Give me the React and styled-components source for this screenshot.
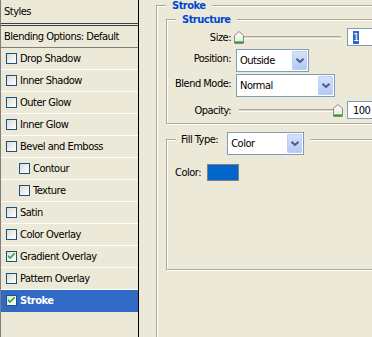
import styled, { createGlobalStyle } from "styled-components";

const GlobalStyle = createGlobalStyle`
  html, body {
    margin: 0;
    padding: 0;
    background: #ece9d8;
  }
  body {
    font-family: "DejaVu Sans Condensed", "Liberation Sans", Arial, sans-serif;
    font-size: 11px;
    letter-spacing: -0.5px;
    color: #000;
  }
`;

const effects = [
  { name: "Drop Shadow" },
  { name: "Inner Shadow" },
  { name: "Outer Glow" },
  { name: "Inner Glow" },
  { name: "Bevel and Emboss" },
  { name: "Contour", sub: true },
  { name: "Texture", sub: true },
  { name: "Satin" },
  { name: "Color Overlay" },
  { name: "Gradient Overlay", checked: true },
  { name: "Pattern Overlay" },
  { name: "Stroke", checked: true, selected: true },
];

function Check({ checked }) {
  return (
    <CheckBox>
      {checked && (
        <svg width="7" height="7" viewBox="0 0 7 7">
          <path d="M0 2 L0 4 L2 6 L7 1 L7 -1 L2 4 Z" fill="#21a121" />
        </svg>
      )}
    </CheckBox>
  );
}

function Chevron() {
  return (
    <svg width="8" height="5" viewBox="0 0 8 5">
      <path d="M0.5 0.8 L4 4 L7.5 0.8" fill="none" stroke="#4d6185" strokeWidth="2" />
    </svg>
  );
}

function Combo({ value, width }) {
  return (
    <ComboBox $w={width}>
      <ComboValue>{value}</ComboValue>
      <DropButton>
        <Chevron />
      </DropButton>
    </ComboBox>
  );
}

function Slider({ value }) {
  return (
    <SliderBox>
      <Track />
      <Thumb style={{ left: -1 + Math.round(value * 99) }}>
        <svg width="10" height="13" viewBox="0 0 10 13">
          <defs>
            <linearGradient id="thumbFill" x1="0" y1="0" x2="0" y2="1">
              <stop offset="0" stopColor="#ffffff" />
              <stop offset="1" stopColor="#e6e6dc" />
            </linearGradient>
          </defs>
          <path d="M0.5 4.5 L5 0.5 L9.5 4.5 L9.5 12.5 L0.5 12.5 Z" fill="url(#thumbFill)" stroke="#8c8c84" />
          <rect x="1" y="10" width="8" height="1" fill="#5fc85f" />
          <rect x="1" y="11" width="8" height="1" fill="#21a121" />
        </svg>
      </Thumb>
    </SliderBox>
  );
}

export default function App() {
  return (
    <>
      <GlobalStyle />
      <Dialog>
        <StylesList>
          <ListHeader>Styles</ListHeader>
          <BlendingRow>Blending Options: Default</BlendingRow>
          {effects.map((fx) => (
            <EffectRow key={fx.name} $sub={fx.sub} $selected={fx.selected}>
              <Check checked={fx.checked} />
              <EffectName>{fx.name}</EffectName>
            </EffectRow>
          ))}
        </StylesList>

        <Settings>
          <StrokeSet>
            <Legend>Stroke</Legend>
            <InnerSet $pad="3px 0 4px 8px">
              <Legend $ml={1}>Structure</Legend>
              <FieldRow $h={18}>
                <Label>Size:</Label>
                <Control>
                  <Slider value={0} />
                  <NumberBox>
                    <Selected>1</Selected>
                  </NumberBox>
                </Control>
              </FieldRow>
              <FieldRow $h={23} $mt={3}>
                <Label $top>Position:</Label>
                <Combo value="Outside" width={73} />
              </FieldRow>
              <FieldRow $h={23} $mt={2}>
                <Label $top>Blend Mode:</Label>
                <Combo value="Normal" width={99} />
              </FieldRow>
              <FieldRow $h={18} $mt={4}>
                <Label>Opacity:</Label>
                <Control>
                  <Slider value={1} />
                  <NumberBox>100</NumberBox>
                </Control>
              </FieldRow>
            </InnerSet>

            <InnerSet $pad="17px 0 88px 8px" $mt={8}>
              <FillLegend>
                <LegendLabel>Fill Type:</LegendLabel>
                <Combo value="Color" width={77} />
              </FillLegend>
              <ColorRow>
                <span>Color:</span>
                <Swatch />
              </ColorRow>
            </InnerSet>
          </StrokeSet>
        </Settings>
      </Dialog>
    </>
  );
}

const Dialog = styled.div`
  display: flex;
  width: 372px;
  height: 337px;
  overflow: hidden;
  background: #ece9d8;
`;

const StylesList = styled.div`
  width: 139px;
  flex-shrink: 0;
  box-sizing: border-box;
  border-left: 1px solid #7f7f7f;
  border-right: 1px solid #000;
  display: flex;
  flex-direction: column;
`;

const ListHeader = styled.div`
  height: 24px;
  box-sizing: border-box;
  border-bottom: 1px solid #404040;
  margin-bottom: 1px;
  padding-left: 3px;
  display: flex;
  align-items: center;
`;

const BlendingRow = styled.div`
  height: 23px;
  box-sizing: border-box;
  border-top: 1px solid #404040;
  border-bottom: 1px solid #7f7f7f;
  padding-left: 3px;
  display: flex;
  align-items: center;
  white-space: nowrap;
`;

const EffectRow = styled.div`
  height: 22px;
  box-sizing: border-box;
  border-bottom: 1px solid ${(p) => (p.$selected ? "#316ac5" : "#fff")};
  padding-left: ${(p) => (p.$sub ? 18 : 5)}px;
  display: flex;
  align-items: center;
  background: ${(p) => (p.$selected ? "#316ac5" : "transparent")};
  color: ${(p) => (p.$selected ? "#fff" : "#000")};
  font-weight: ${(p) => (p.$selected ? "bold" : "normal")};
`;

const CheckBox = styled.span`
  width: 11px;
  height: 11px;
  box-sizing: border-box;
  border: 1px solid #1c5180;
  background: linear-gradient(135deg, #dcdcd7, #fff);
  display: flex;
  align-items: center;
  justify-content: center;
  flex-shrink: 0;
`;

const EffectName = styled.span`
  margin-left: 3px;
  white-space: nowrap;
`;

const Settings = styled.div`
  flex: 1;
  overflow: hidden;
  padding-left: 17px;
`;

const StrokeSet = styled.fieldset`
  margin: 0;
  padding: 3px 0 0 9px;
  width: 260px;
  height: 380px;
  box-sizing: border-box;
  border: 1px solid #aca899;
  box-shadow: inset 1px 1px 0 #fff, 1px 1px 0 #fff;
  min-width: 0;
`;

const InnerSet = styled.fieldset`
  margin: ${(p) => p.$mt || 0}px 0 0 0;
  padding: ${(p) => p.$pad};
  border: 1px solid #aca899;
  box-shadow: inset 1px 1px 0 #fff, 1px 1px 0 #fff;
  min-width: 0;
`;

const Legend = styled.legend`
  padding: 0 6px;
  margin-left: ${(p) => p.$ml || 0}px;
  height: 11px;
  line-height: 11px;
  font-weight: bold;
  color: #0046d5;
  background: #ece9d8;
`;

const FillLegend = styled.legend`
  padding: 0 6px 0 5px;
  margin-left: 1px;
  height: 15px;
  display: flex;
  align-items: flex-start;
  gap: 9px;
  background: #ece9d8;
`;

const LegendLabel = styled.span`
  line-height: 15px;
  white-space: nowrap;
`;

const FieldRow = styled.div`
  display: grid;
  grid-template-columns: 56px auto;
  column-gap: 5px;
  align-items: center;
  height: ${(p) => p.$h}px;
  margin-top: ${(p) => p.$mt || 0}px;
`;

const Label = styled.span`
  text-align: right;
  white-space: nowrap;
  line-height: 13px;
  align-self: ${(p) => (p.$top ? "start" : "center")};
  padding-top: ${(p) => (p.$top ? 3 : 0)}px;
`;

const Control = styled.div`
  display: flex;
  align-items: center;
`;

const SliderBox = styled.div`
  position: relative;
  width: 110px;
  height: 18px;
  margin-left: -1px;
  padding: 0 4px;
  box-sizing: border-box;
  display: flex;
  align-items: center;
`;

const Track = styled.div`
  flex: 1;
  height: 3px;
  box-sizing: border-box;
  border-top: 1px solid #aca899;
  border-bottom: 1px solid #fff;
  background: #d8d4c4;
`;

const Thumb = styled.div`
  position: absolute;
  top: 3px;
  width: 10px;
  height: 13px;
  line-height: 0;
`;

const NumberBox = styled.div`
  margin-left: 2px;
  width: 40px;
  height: 18px;
  box-sizing: border-box;
  border: 1px solid #7f9db9;
  background: #fff;
  padding-left: 5px;
  display: flex;
  align-items: center;
  white-space: nowrap;
`;

const Selected = styled.span`
  background: #316ac5;
  color: #fff;
  line-height: 13px;
`;

const ComboBox = styled.div`
  width: ${(p) => p.$w}px;
  height: 23px;
  box-sizing: border-box;
  border: 1px solid #7f9db9;
  background: #fff;
  display: flex;
  align-items: stretch;
`;

const ComboValue = styled.span`
  flex: 1;
  padding-left: 3px;
  display: flex;
  align-items: center;
  white-space: nowrap;
`;

const DropButton = styled.span`
  width: 15px;
  margin: 1px;
  box-sizing: border-box;
  border: 1px solid #bccef9;
  border-radius: 1px;
  background: linear-gradient(#d6e2fd, #b4c8f6);
  display: flex;
  align-items: center;
  justify-content: center;
`;

const ColorRow = styled.div`
  display: flex;
  align-items: center;
  gap: 6px;
  height: 17px;
`;

const Swatch = styled.span`
  width: 32px;
  height: 17px;
  box-sizing: border-box;
  border: 1px solid #7f7f7f;
  background: #0066cc;
`;
